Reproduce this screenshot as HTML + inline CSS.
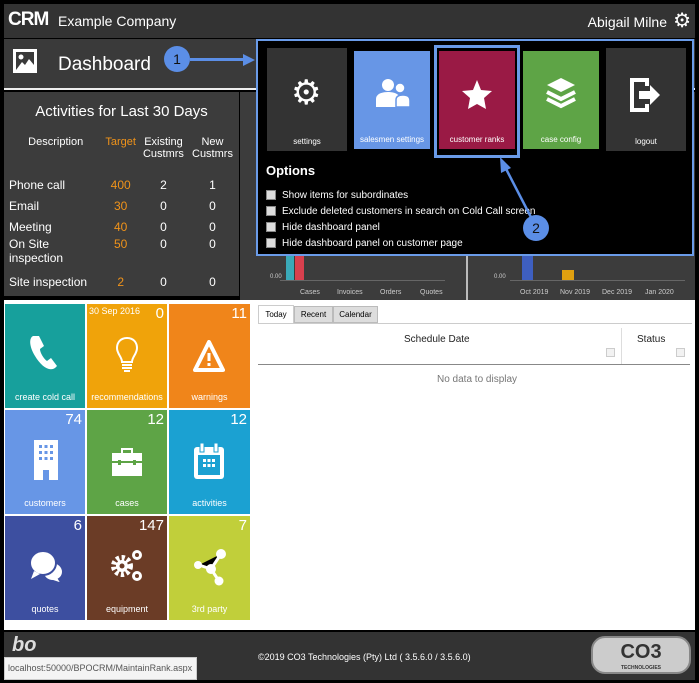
<!DOCTYPE html>
<html><head><meta charset="utf-8"><style>
*{margin:0;padding:0;box-sizing:border-box}
body{width:699px;height:683px;background:#000;font-family:"Liberation Sans",sans-serif;position:relative;overflow:hidden}
.a{position:absolute;white-space:nowrap}
.top{left:4px;top:4px;width:691px;height:34px;background:#333}
.dash{left:4px;top:39px;width:691px;height:51px;background:#3a3a3a;border-bottom:2px solid #eee}
.act{left:4px;top:92px;width:235px;height:204px;background:#3c3c3c;color:#fff}
.charts{left:240px;top:92px;width:455px;height:208px;background:#3c3c3c}
.white{left:4px;top:300px;width:691px;height:330px;background:#fff}
.tile{position:absolute;color:#fff;font-size:9px;text-align:center}
.tile .l{position:absolute;bottom:6px;width:100%}
.tile .n{position:absolute;right:3px;top:1px;font-size:15px}
.foot{left:4px;top:632px;width:691px;height:48px;background:#333}
.ov{left:256px;top:39px;width:438px;height:217px;background:#000;border:2px solid #6a9be8}
.ot{position:absolute;color:#fff;font-size:8px;text-align:center}
.ot .l{position:absolute;bottom:5px;width:100%}
.cb{display:flex;align-items:center;color:#fff;font-size:10px;height:16px}
.cb i{display:inline-block;width:10px;height:10px;background:#ddd;border:1px solid #888;margin-right:6px}
td{font-size:12px;padding:0}
.lab{position:absolute;color:#ccc;font-size:7px;top:197px}
</style></head><body>
<div class="a top"><div class="a" style="left:4px;top:5px;color:#fff;font-weight:bold;font-size:19px;letter-spacing:-1px">CRM</div><div class="a" style="left:54px;top:9px;color:#fff;font-size:14px">Example Company</div><div class="a" style="right:28px;top:10px;color:#fff;font-size:14px">Abigail Milne</div><div class="a" style="right:4px;top:4px;color:#fff;font-size:20px">⚙</div></div>
<div class="a dash"><div class="a" style="left:9px;top:10px;width:24px;height:24px;border:3px solid #fff"><svg width="18" height="18" viewBox="0 0 18 18"><circle cx="5" cy="5" r="2.5" fill="#fff"/><path d="M0 18L6 10 9 13 13 7 18 13V18Z" fill="#fff"/></svg></div><div class="a" style="left:54px;top:15px;color:#fff;font-size:19px">Dashboard</div></div>
<div class="a" style="left:164px;top:46px;width:26px;height:26px;border-radius:50%;background:#5b8ee6;color:#111;font-size:14px;text-align:center;line-height:26px">1</div>
<div class="a" style="left:190px;top:58px;width:55px;height:3px;background:#5b8ee6"></div>
<div class="a" style="left:243px;top:54px;border-left:12px solid #5b8ee6;border-top:6px solid transparent;border-bottom:6px solid transparent"></div>
<div class="a act"><div style="text-align:center;font-size:15px;margin-top:11px">Activities for Last 30 Days</div>
<table style="position:absolute;left:5px;top:44px;width:228px;border-collapse:collapse;color:#fff">
<tr style="height:38px;vertical-align:top"><td style="text-align:center;font-size:11px">Description</td><td style="color:#f0931a;text-align:center;font-size:11px">Target</td><td style="text-align:center;font-size:11px">Existing<br>Custmrs</td><td style="text-align:center;font-size:11px">New<br>Custmrs</td></tr>
<tr style="height:21px"><td>Phone call</td><td style="color:#f0931a;text-align:center">400</td><td style="text-align:center">2</td><td style="text-align:center">1</td></tr>
<tr style="height:21px"><td>Email</td><td style="color:#f0931a;text-align:center">30</td><td style="text-align:center">0</td><td style="text-align:center">0</td></tr>
<tr style="height:21px"><td>Meeting</td><td style="color:#f0931a;text-align:center">40</td><td style="text-align:center">0</td><td style="text-align:center">0</td></tr>
<tr style="height:34px;vertical-align:top"><td>On Site<br>inspection</td><td style="color:#f0931a;text-align:center">50</td><td style="text-align:center">0</td><td style="text-align:center">0</td></tr>
<tr style="height:21px"><td>Site inspection</td><td style="color:#f0931a;text-align:center">2</td><td style="text-align:center">0</td><td style="text-align:center">0</td></tr></table></div>
<div class="a charts"><div class="a" style="left:226px;top:0;width:2px;height:208px;background:#bbb"></div>
<div class="a" style="left:46px;top:164px;width:8px;height:24px;background:#3aa9b8"></div><div class="a" style="left:55px;top:164px;width:9px;height:24px;background:#d8404e"></div>
<div class="a" style="left:40px;top:188px;width:165px;height:1px;background:#666"></div>
<div class="a" style="left:30px;top:182px;color:#ccc;font-size:6px">0.00</div>
<div class="lab" style="left:60px">Cases</div><div class="lab" style="left:97px">Invoices</div><div class="lab" style="left:140px">Orders</div><div class="lab" style="left:180px">Quotes</div>
<div class="a" style="left:282px;top:164px;width:11px;height:24px;background:#3e5fc0"></div><div class="a" style="left:322px;top:178px;width:12px;height:10px;background:#e0a010"></div>
<div class="a" style="left:270px;top:188px;width:175px;height:1px;background:#666"></div>
<div class="a" style="left:254px;top:182px;color:#ccc;font-size:6px">0.00</div>
<div class="lab" style="left:280px">Oct 2019</div><div class="lab" style="left:320px">Nov 2019</div><div class="lab" style="left:362px">Dec 2019</div><div class="lab" style="left:405px">Jan 2020</div></div>
<div class="a white"></div>
<div class="tile" style="left:5px;top:304px;width:80px;height:104px;background:#17a09c"><svg class="a" style="left:24px;top:30px" width="32" height="38" viewBox="0 0 32 38"><path d="M4 2C0 4 0 12 6 22 12 32 20 38 26 34L28 32 22 24 18 27C15 25 11 19 11 15L15 12 10 2Z" fill="#fff"/></svg><div class="l">create cold call</div></div>
<div class="tile" style="left:87px;top:304px;width:80px;height:104px;background:#f0a30a"><div class="a" style="left:2px;top:2px;font-size:9px">30 Sep 2016</div><div class="n">0</div><svg class="a" style="left:28px;top:32px" width="24" height="38" viewBox="0 0 24 38"><path d="M12 2C5 2 2 7 2 12 2 18 7 21 7 26H17C17 21 22 18 22 12 22 7 19 2 12 2Z" fill="none" stroke="#fff" stroke-width="2"/><path d="M7 29H17M7 32H17M9 35H15" stroke="#fff" stroke-width="2"/></svg><div class="l">recommendations</div></div>
<div class="tile" style="left:169px;top:304px;width:81px;height:104px;background:#f0851a"><div class="n">11</div><svg class="a" style="left:24px;top:36px" width="32" height="32" viewBox="0 0 32 32"><path d="M16 2L30 30H2Z" fill="none" stroke="#fff" stroke-width="4" stroke-linejoin="round"/><rect x="14.5" y="13" width="3" height="8" fill="#fff"/><rect x="14.5" y="23" width="3" height="3" fill="#fff"/></svg><div class="l">warnings</div></div>
<div class="tile" style="left:5px;top:410px;width:80px;height:104px;background:#6796e6"><div class="n">74</div><svg class="a" style="left:29px;top:30px" width="24" height="40" viewBox="0 0 24 40"><path d="M0 0H24V40H15V30H9V40H0Z" fill="#fff"/><g fill="#6796e6"><rect x="5" y="5" width="3" height="3"/><rect x="10.5" y="5" width="3" height="3"/><rect x="16" y="5" width="3" height="3"/><rect x="5" y="11" width="3" height="3"/><rect x="10.5" y="11" width="3" height="3"/><rect x="16" y="11" width="3" height="3"/><rect x="5" y="17" width="3" height="3"/><rect x="10.5" y="17" width="3" height="3"/><rect x="16" y="17" width="3" height="3"/></g></svg><div class="l">customers</div></div>
<div class="tile" style="left:87px;top:410px;width:80px;height:104px;background:#5ea446"><div class="n">12</div><svg class="a" style="left:25px;top:38px" width="30" height="28" viewBox="0 0 30 28"><path d="M10 5V1H20V5" fill="none" stroke="#fff" stroke-width="2"/><rect x="0" y="5" width="30" height="23" fill="#fff"/><rect x="0" y="13" width="30" height="2" fill="#5ea446"/><rect x="6" y="12" width="3" height="5" fill="#5ea446"/><rect x="21" y="12" width="3" height="5" fill="#5ea446"/></svg><div class="l">cases</div></div>
<div class="tile" style="left:169px;top:410px;width:81px;height:104px;background:#1ba1d2"><div class="n">12</div><svg class="a" style="left:25px;top:33px" width="30" height="36" viewBox="0 0 30 36"><rect x="0" y="4" width="30" height="32" rx="3" fill="#fff"/><rect x="4" y="12" width="22" height="20" fill="#1ba1d2"/><rect x="6" y="0" width="4" height="9" fill="#fff" stroke="#1ba1d2"/><rect x="20" y="0" width="4" height="9" fill="#fff" stroke="#1ba1d2"/><g fill="#fff"><rect x="9" y="16" width="3" height="3"/><rect x="13.5" y="16" width="3" height="3"/><rect x="18" y="16" width="3" height="3"/><rect x="9" y="21" width="3" height="3"/><rect x="13.5" y="21" width="3" height="3"/><rect x="18" y="21" width="3" height="3"/></g></svg><div class="l">activities</div></div>
<div class="tile" style="left:5px;top:516px;width:80px;height:104px;background:#3d4fa0"><div class="n">6</div><svg class="a" style="left:24px;top:34px" width="36" height="34" viewBox="0 0 36 34"><path d="M22 12C30 12 34 17 34 22 34 25 32 28 30 29L33 34 24 31C18 31 14 27 14 22" fill="#fff" stroke="#3d4fa0" stroke-width="2"/><ellipse cx="14" cy="13" rx="13" ry="12" fill="#fff" stroke="#3d4fa0" stroke-width="2"/><path d="M5 21L2 29 11 24Z" fill="#fff"/></svg><div class="l">quotes</div></div>
<div class="tile" style="left:87px;top:516px;width:80px;height:104px;background:#6b3c26"><div class="n">147</div><svg class="a" style="left:24px;top:30px" width="34" height="38" viewBox="0 0 34 38"><circle cx="11" cy="20" r="8" fill="none" stroke="#fff" stroke-width="6" stroke-dasharray="3 2.3"/><circle cx="11" cy="20" r="6" fill="#fff"/><circle cx="11" cy="20" r="2.5" fill="#6b3c26"/><circle cx="26" cy="9" r="5" fill="#fff"/><circle cx="26" cy="9" r="2" fill="#6b3c26"/><circle cx="26" cy="30" r="5" fill="#fff"/><circle cx="26" cy="30" r="2" fill="#6b3c26"/></svg><div class="l">equipment</div></div>
<div class="tile" style="left:169px;top:516px;width:81px;height:104px;background:#c1cf3a"><div class="n">7</div><svg class="a" style="left:24px;top:32px" width="34" height="38" viewBox="0 0 34 38"><path d="M6 17L18 21 28 6M18 21L26 33" stroke="#fff" stroke-width="3"/><circle cx="28" cy="6" r="5" fill="#fff"/><circle cx="18" cy="21" r="5" fill="#fff"/><circle cx="5" cy="17" r="4" fill="#fff"/><circle cx="26" cy="33" r="4.5" fill="#fff"/></svg><div class="l">3rd party</div></div>
<div class="a" style="left:258px;top:305px;width:36px;height:19px;border:1px solid #ccc;border-bottom:none;background:#fff;font-size:8px;text-align:center;line-height:18px">Today</div>
<div class="a" style="left:294px;top:306px;width:39px;height:17px;border:1px solid #bbb;background:#ddd;font-size:8px;text-align:center;line-height:16px">Recent</div>
<div class="a" style="left:333px;top:306px;width:45px;height:17px;border:1px solid #bbb;background:#ddd;font-size:8px;text-align:center;line-height:16px">Calendar</div>
<div class="a" style="left:258px;top:323px;width:434px;height:1px;background:#ccc"></div>
<div class="a" style="left:404px;top:334px;font-size:10px;color:#222">Schedule Date</div>
<div class="a" style="left:621px;top:328px;width:1px;height:36px;background:#ddd"></div>
<div class="a" style="left:637px;top:334px;font-size:10px;color:#222">Status</div>
<div class="a" style="left:606px;top:348px;width:9px;height:9px;border:1px solid #ccc;background:#f2f2f2"></div>
<div class="a" style="left:676px;top:348px;width:9px;height:9px;border:1px solid #ccc;background:#f2f2f2"></div>
<div class="a" style="left:258px;top:364px;width:432px;height:1px;background:#888"></div>
<div class="a" style="left:437px;top:374px;font-size:10px;color:#777">No data to display</div>
<div class="a foot"><div class="a" style="left:8px;top:2px;color:#ddd;font-size:20px;font-style:italic;font-weight:bold">bo</div><div class="a" style="left:254px;top:20px;color:#fff;font-size:9px">©2019 CO3 Technologies (Pty) Ltd ( 3.5.6.0 / 3.5.6.0)</div><div class="a" style="left:587px;top:4px;width:100px;height:38px;border-radius:14px;background:#ccc;border:2px solid #888;color:#333;font-weight:bold;font-size:20px;text-align:center;line-height:28px">CO3<div style="font-size:5px;line-height:4px">TECHNOLOGIES</div></div></div>
<div class="a" style="left:4px;top:657px;width:193px;height:23px;background:#f4f4f4;border:1px solid #ccc;color:#555;font-size:9px;padding:5px 3px;overflow:hidden">localhost:50000/BPOCRM/MaintainRank.aspx</div>
<div class="a ov">
<div class="ot" style="left:9px;top:7px;width:80px;height:103px;background:#333"><div class="a" style="left:24px;top:28px;font-size:34px;line-height:34px">⚙</div><div class="l">settings</div></div>
<div class="ot" style="left:96px;top:10px;width:76px;height:98px;background:#6796e6"><svg class="a" style="left:22px;top:26px" width="34" height="30" viewBox="0 0 34 30"><circle cx="12" cy="8" r="6" fill="#fff"/><path d="M0 30V22C0 17 6 15 12 15 18 15 24 17 24 22V30Z" fill="#fff"/><circle cx="24" cy="11" r="5" fill="#fff" stroke="#6796e6" stroke-width="1.5"/><path d="M20 30V23C20 20 22 18 27 18 32 18 34 20 34 24V30Z" fill="#fff" stroke="#6796e6" stroke-width="1.5"/></svg><div class="l">salesmen settings</div></div>
<div class="a" style="left:176px;top:4px;width:86px;height:113px;border:3px solid #6a9be8"></div>
<div class="ot" style="left:181px;top:10px;width:76px;height:98px;background:#9a1a45"><svg class="a" style="left:22px;top:28px" width="32" height="32" viewBox="0 0 32 32"><path d="M16 1L20 11 31 12 23 19 25 30 16 25 7 30 9 19 1 12 12 11Z" fill="#fff"/></svg><div class="l">customer ranks</div></div>
<div class="ot" style="left:265px;top:10px;width:76px;height:98px;background:#5ea446"><svg class="a" style="left:23px;top:26px" width="30" height="34" viewBox="0 0 30 34"><path d="M15 1L29 8 15 15 1 8Z" fill="#fff"/><path d="M1 15L15 22 29 15M1 22L15 29 29 22" fill="none" stroke="#fff" stroke-width="4"/></svg><div class="l">case config</div></div>
<div class="ot" style="left:348px;top:7px;width:80px;height:103px;background:#333"><svg class="a" style="left:24px;top:30px" width="32" height="34" viewBox="0 0 32 34"><path d="M17 8V2H2V32H17V26" fill="none" stroke="#fff" stroke-width="4"/><path d="M9 13H20V7L30 17 20 27V21H9Z" fill="#fff"/></svg><div class="l">logout</div></div>
<div class="a" style="left:8px;top:122px;color:#fff;font-weight:bold;font-size:13px">Options</div>
<div class="a" style="left:8px;top:146px"><div class="cb"><i></i>Show items for subordinates</div><div class="cb"><i></i>Exclude deleted customers in search on Cold Call screen</div><div class="cb"><i></i>Hide dashboard panel</div><div class="cb"><i></i>Hide dashboard panel on customer page</div></div>
</div>
<svg class="a" style="left:495px;top:155px" width="60" height="85" viewBox="0 0 60 85"><path d="M40 70L8 8" stroke="#5b8ee6" stroke-width="2.5"/><path d="M5 2L6 18 16 13Z" fill="#5b8ee6"/></svg>
<div class="a" style="left:523px;top:215px;width:26px;height:26px;border-radius:50%;background:#5b8ee6;color:#111;font-size:14px;text-align:center;line-height:26px">2</div>
</body></html>
